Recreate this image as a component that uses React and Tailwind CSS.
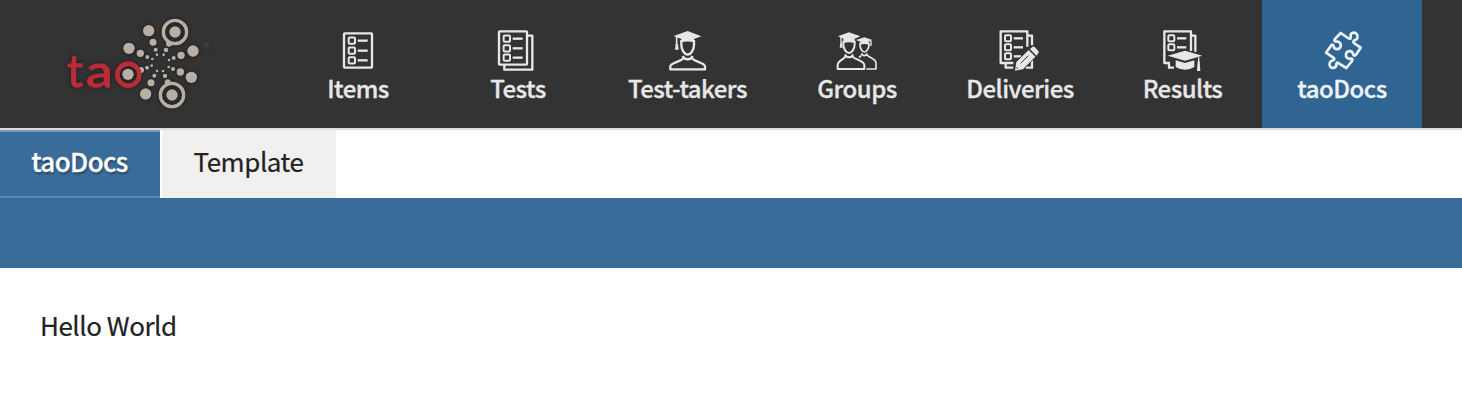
import React from 'react';

const FONT = "font-['Noto_Sans_CJK_SC','Noto_Sans',sans-serif]";

function Icon({ viewBox, children }) {
  return (
    <svg
      className="block h-11 w-12"
      viewBox={viewBox}
      fill="none"
      stroke="currentColor"
      strokeWidth="7"
      strokeLinejoin="round"
      strokeLinecap="butt"
    >
      {children}
    </svg>
  );
}

function Row({ x, y, s = 19, l = 30, gap = 8 }) {
  return (
    <>
      <rect x={x} y={y - s / 2} width={s} height={s} rx="3" strokeWidth="6" />
      <path d={`M${x + s + gap} ${y}h${l}`} />
    </>
  );
}

function ItemsIcon() {
  return (
    <Icon viewBox="42 24 144 132">
      <rect x="72" y="40" width="84" height="103" rx="2" />
      <Row x={86} y={62} />
      <Row x={86} y={92} />
      <Row x={86} y={121} />
    </Icon>
  );
}

function TestsIcon() {
  return (
    <Icon viewBox="42 24 144 132">
      <rect x="57" y="34" width="84" height="100" rx="2" />
      <path d="M142 47h15v102H73v-14" />
      <Row x={71} y={56} />
      <Row x={71} y={85} />
      <Row x={71} y={113} />
    </Icon>
  );
}

function TestTakersIcon() {
  return (
    <Icon viewBox="132 24 144 132">
      <path d="M161 48L203 33l41 16-22 8v10q-18-5-38 0V57z" fill="currentColor" stroke="none" />
      <path d="M170 50v24" strokeWidth="5" />
      <path d="M167 72h7l2 17h-11z" fill="currentColor" stroke="none" />
      <path d="M184 60v14c0 16 10 30 19 30s19-14 19-30V60" strokeWidth="7" />
      <path d="M188 108c5 13 25 13 30 0M190 114c-3 10-39 14-39 25v9h104v-9c0-11-36-15-39-25" strokeWidth="7" />
    </Icon>
  );
}

function GroupsIcon() {
  return (
    <Icon viewBox="69 24 144 132">
      <path d="M84 49l33-12 34 12-17 7v13q-16-5-34 0V56z" fill="currentColor" stroke="none" />
      <path d="M93 51v20" strokeWidth="4" />
      <path d="M91 69h5l2 14h-9z" fill="currentColor" stroke="none" />
      <path d="M100 62v10c0 15 9 27 17 27s17-12 17-27V62" strokeWidth="6" />
      <path d="M105 103c4 12 20 12 24 0M106 109c-3 9-23 13-23 26v12h80v-12c0-13-32-17-35-26" strokeWidth="6" />
      <path d="M138 60l25-8 24 8-11 5v9q-12-4-25 0v-9z" fill="currentColor" stroke="none" />
      <path d="M183 62v16" strokeWidth="4" />
      <path d="M150 68v6c0 11 7 22 13 22s14-11 14-22v-6M154 100c4 9 14 9 18 0M154 106l-7 7M172 105c2 8 26 9 26 25v17h-29" strokeWidth="5" />
    </Icon>
  );
}

function DeliveriesIcon() {
  return (
    <Icon viewBox="108 24 144 132">
      <path d="M160 129h-38V34h80v46" />
      <path d="M204 47h12v29M137 131v12h23M216 119v24h-19" />
      <Row x={135} y={55} s={18} l={28} />
      <Row x={135} y={82} s={18} l={28} />
      <Row x={135} y={109} s={18} l={22} />
      <path
        d="M165 152l4-26 37-36 20 20-37 38zM210 87l7-6q4-3 7 0l11 12q3 4 0 7l-6 7z"
        fill="#333"
        stroke="#333"
        strokeWidth="4"
      />
      <path d="M165 152l4-26 37-36 20 20-37 38z" fill="currentColor" stroke="none" />
      <path d="M210 87l7-6q4-3 7 0l11 12q3 4 0 7l-6 7z" fill="currentColor" stroke="none" />
      <path d="M182 130l23-23" stroke="#333" strokeWidth="3" />
      <path d="M169 142l5 5" stroke="#333" strokeWidth="3" />
    </Icon>
  );
}

function ResultsIcon() {
  return (
    <Icon viewBox="57 24 144 132">
      <path d="M90 129H73V34h80v59" />
      <path d="M154 47h12v48M87 131v12h15" />
      <Row x={85} y={55} s={18} l={28} />
      <Row x={85} y={82} s={18} l={28} />
      <path d="M83 107l52-15 52 15-52 15zM107 121l28 8 28-8v20q-28 17-56 0z" fill="currentColor" stroke="none" />
      <path d="M176 112v15" strokeWidth="4" />
      <path d="M173 124h6l2 29h-10z" fill="currentColor" stroke="none" />
    </Icon>
  );
}

function PuzzleIcon() {
  return (
    <Icon viewBox="189 84 144 132">
      <path
        d="M257 99L279 114C286 119 289 116 287 110C285 99 297 95 304 101C312 109 307 119 299 121C294 123 294 127 298 130L317 143L303 164C299 169 295 167 294 161C291 149 275 152 273 162C271 172 279 178 287 176C292 175 294 179 291 183L274 204L251 190C246 186 243 189 244 195C243 204 231 207 226 200C220 192 225 182 234 181C239 180 239 176 235 173L213 158L228 137C231 132 235 134 236 140C239 151 254 149 257 139C259 129 251 123 243 125C238 125 237 121 240 117Z"
        strokeWidth="8"
      />
    </Icon>
  );
}

const DOTS = [
  [296, 92, 17], [309, 127, 10.5], [317, 149, 6], [321, 164, 4],
  [237, 145, 17], [271, 160, 11], [292, 171, 6], [307, 177, 4],
  [429, 153, 17], [393, 166, 11], [371, 174, 6], [357, 180, 4],
  [424, 232, 17], [391, 216, 11], [369, 207, 6], [356, 201, 4],
  [287, 282, 17], [303, 248, 10.5], [313, 227, 6], [321, 213, 4],
  [234, 223, 17], [273, 210, 9], [291, 203, 6], [305, 197, 4],
  [357, 131, 9], [348, 150, 7], [341, 164, 4],
  [353, 247, 9], [345, 228, 6.5], [339, 213, 4],
  [375, 96, 17], [366, 285, 17],
];

function Logo() {
  return (
    <svg
      className="block h-32 w-[180px] drop-shadow-[0_0_2px_rgba(0,0,0,0.5)]"
      viewBox="0 0 540 384"
      role="img"
      aria-label="tao"
    >
      <g fill="#b8aea4">
        {DOTS.map(([x, y, r]) => (
          <circle key={`${x}-${y}`} cx={x} cy={y} r={r} />
        ))}
      </g>
      <g fill="none" stroke="#b8aea4" strokeWidth="10">
        <circle cx="375" cy="96" r="35" />
        <circle cx="366" cy="285" r="35" />
      </g>
      <g fill="none" stroke="#b92c38" strokeWidth="14">
        <circle cx="235" cy="224" r="33" />
      </g>
      <g
        fill="#b92c38"
        stroke="#b92c38"
        strokeWidth="4"
        strokeLinejoin="round"
        fontSize="134"
        className="font-['Lato',sans-serif] font-normal"
      >
        <text x="52" y="261" textLength="47" lengthAdjust="spacingAndGlyphs">t</text>
        <text x="108" y="261" textLength="80" lengthAdjust="spacingAndGlyphs">a</text>
      </g>
      <text x="460" y="148" fontSize="26" fill="#5a5653" className="font-['Liberation_Sans',sans-serif]">®</text>
    </svg>
  );
}

const NAV = [
  { label: 'Items', Icon: ItemsIcon, width: 'w-40' },
  { label: 'Tests', Icon: TestsIcon, width: 'w-40' },
  { label: 'Test-takers', Icon: TestTakersIcon, width: 'w-[179px]' },
  { label: 'Groups', Icon: GroupsIcon, width: 'w-40' },
  { label: 'Deliveries', Icon: DeliveriesIcon, width: 'w-[166px]' },
  { label: 'Results', Icon: ResultsIcon, width: 'w-[159px]' },
  { label: 'taoDocs', Icon: PuzzleIcon, width: 'w-40', active: true },
];

export default function App() {
  return (
    <div className={`h-[416px] w-full overflow-hidden bg-white text-[#222] ${FONT}`}>
      <header className="flex h-[130px] border-b-2 border-[#ddd] bg-[#333]">
        <div className="w-[278px] shrink-0 pl-[50px]">
          <Logo />
        </div>
        <nav className="flex">
          {NAV.map(({ label, Icon: Glyph, width, active }) => (
            <a
              key={label}
              className={`flex h-32 shrink-0 flex-col items-center pt-7 ${width} ${
                active ? 'bg-[#306493] text-[#eef2f6]' : 'text-[#e7e7e7]'
              }`}
            >
              <Glyph />
              <span className="text-2xl leading-8 font-medium tracking-[-0.52px] whitespace-nowrap [-webkit-text-stroke:0.3px_currentColor]">
                {label}
              </span>
            </a>
          ))}
        </nav>
      </header>
      <div className="flex h-[68px] gap-0.5">
        <div className="flex w-40 items-center justify-center border-t-2 border-b-2 border-t-[#7099bb] border-b-[#5b87ae] bg-[#3a6c9a] pr-px pb-[7px] text-[26px] leading-none font-medium tracking-[-0.6px] text-white [-webkit-text-stroke:0.3px_currentColor] [text-shadow:1px_2px_2px_rgba(0,0,0,0.4)]">
          <span>taoDocs</span>
        </div>
        <div className="flex w-[174px] items-center justify-center bg-[#f2f0ee] pr-px pb-[7px] text-[26px] leading-none tracking-[-0.45px] [-webkit-text-stroke:0.2px_currentColor]">
          <span>Template</span>
        </div>
      </div>
      <div className="h-[70px] bg-[#3a6c9a]" />
      <main className="px-10 pt-[38px] text-[26px] leading-[38px] tracking-[-0.48px] [-webkit-text-stroke:0.2px_currentColor]">
        Hello World
      </main>
    </div>
  );
}
